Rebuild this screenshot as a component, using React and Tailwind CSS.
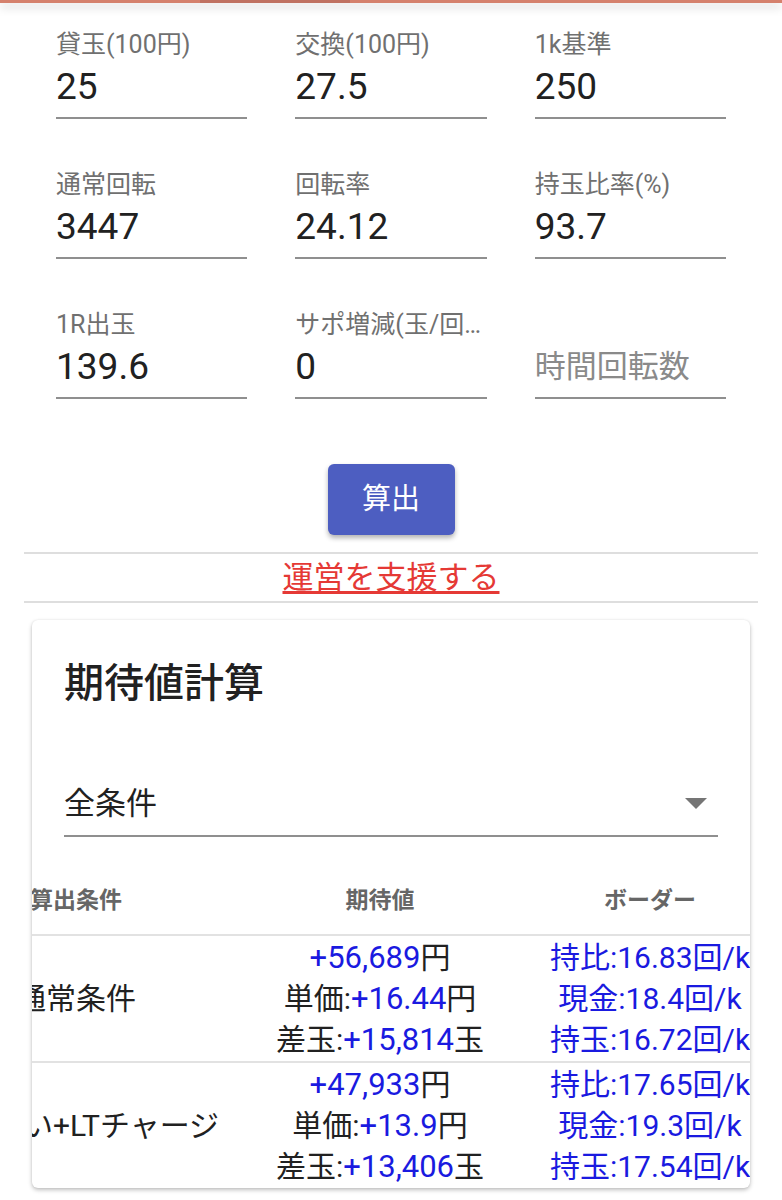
import React, { useLayoutEffect, useRef } from 'react';

const font = { fontFamily: 'Roboto, "Noto Sans CJK JP", sans-serif' };

const fields = [
  { label: '貸玉(100円)', value: '25' },
  { label: '交換(100円)', value: '27.5' },
  { label: '1k基準', value: '250' },
  { label: '通常回転', value: '3447' },
  { label: '回転率', value: '24.12' },
  { label: '持玉比率(%)', value: '93.7' },
  { label: '1R出玉', value: '139.6' },
  { label: 'サポ増減(玉/回転)', value: '0' },
  { label: '', value: '', placeholder: '時間回転数' },
];

const rows = [
  {
    name: '通常条件',
    ev: [['', '+56,689', '円'], ['単価:', '+16.44', '円'], ['差玉:', '+15,814', '玉']],
    border: ['持比:16.83回/k', '現金:18.4回/k', '持玉:16.72回/k'],
  },
  {
    name: '止めない+LTチャージ',
    ev: [['', '+47,933', '円'], ['単価:', '+13.9', '円'], ['差玉:', '+13,406', '玉']],
    border: ['持比:17.65回/k', '現金:19.3回/k', '持玉:17.54回/k'],
  },
];

const Field = ({ label, value, placeholder }) => (
  <div className="flex flex-col min-w-0">
    <div className="text-[25px] leading-[30px] text-[#707070] truncate h-[30px]">{label}</div>
    {placeholder ? (
      <div className="mt-[5px] text-[31px] leading-[44px] pb-[8px] border-b-2 border-[#8f8f8f] text-[#8a8a8a]">{placeholder}</div>
    ) : (
      <div className="mt-[5px] text-[37px] leading-[44px] pb-[8px] border-b-2 border-[#8f8f8f] text-[#212121]">{value}</div>
    )}
  </div>
);

const App = () => {
  const scrollRef = useRef(null);

  useLayoutEffect(() => {
    if (scrollRef.current) scrollRef.current.scrollLeft = 106;
  }, []);

  return (
    <div className="bg-white min-h-[1200px] w-[782px] overflow-hidden" style={font}>
      {/* app bar edge */}
      <div className="h-[3px] bg-[#d5816d] shadow-[0_4px_10px_rgba(0,0,0,0.22)] flex">
        <div className="ml-[200px] w-[150px] h-[3px] bg-[#c07262]" />
      </div>

      <div className="grid grid-cols-3 gap-x-[48px] gap-y-[51px] px-[56px] pt-[27px]">
        {fields.map((f, i) => <Field key={i} {...f} />)}
      </div>

      <div className="flex justify-center mt-[65px]">
        <button className="w-[127px] h-[71px] rounded-[6px] bg-[#4d5ec1] text-white text-[29px] shadow-[0_3px_5px_rgba(0,0,0,0.3)]">算出</button>
      </div>

      <div className="mx-[24px] mt-[17px] border-t-2 border-[#dedede]" />
      <div className="h-[47px] flex items-center justify-center">
        <a className="text-[31px] leading-[40px] text-[#e53935] underline underline-offset-[3px]">運営を支援する</a>
      </div>
      <div className="mx-[24px] border-t-2 border-[#dedede]" />

      <div className="mx-[32px] mt-[17px] rounded-[6px] bg-white shadow-[0_2px_4px_rgba(0,0,0,0.25),0_0_2px_rgba(0,0,0,0.08)] overflow-hidden">
        <div className="px-[32px] pt-[40px]">
          <h2 className="text-[40px] leading-[48px] font-medium text-[#212121]">期待値計算</h2>
          <div className="mt-[76px] flex items-center justify-between pb-[11px] border-b-2 border-[#8f8f8f]">
            <span className="text-[31px] leading-[40px] text-[#212121]">全条件</span>
            <svg width="24" height="12" viewBox="0 0 24 12" className="mr-[10px]">
              <path d="M1 0 L23 0 L12 11 Z" fill="#757575" />
            </svg>
          </div>
        </div>

        <div ref={scrollRef} className="mt-[26px] overflow-x-auto [scrollbar-width:none]">
          <table className="table-fixed w-[840px] border-collapse">
            <colgroup>
              <col className="w-[300px]" />
              <col className="w-[308px]" />
              <col className="w-[232px]" />
            </colgroup>
            <thead>
              <tr className="border-b-2 border-[#e2e2e2]">
                {['算出条件', '期待値', 'ボーダー'].map(h => (
                  <th key={h} className="h-[72px] text-center font-bold text-[23px] text-[#666666] pt-[6px]">{h}</th>
                ))}
              </tr>
            </thead>
            <tbody>
              {rows.map((r, i) => (
                <tr key={r.name} className={i === 0 ? 'border-b-2 border-[#e2e2e2]' : ''}>
                  <td className="text-center text-[30px] text-[#212121] whitespace-nowrap">{r.name}</td>
                  <td className="text-center text-[30px] leading-[41px] whitespace-nowrap py-[1px]">
                    {r.ev.map(([pre, num, unit], j) => (
                      <div key={j}>
                        <span className="text-[#212121]">{pre}</span>
                        <span className="text-[#1a1ae0] text-[31px]">{num}</span>
                        <span className="text-[#212121]">{unit}</span>
                      </div>
                    ))}
                  </td>
                  <td className="text-center text-[30px] leading-[41px] whitespace-nowrap text-[#1a1ae0] py-[1px]">
                    {r.border.map(b => <div key={b}>{b}</div>)}
                  </td>
                </tr>
              ))}
            </tbody>
          </table>
        </div>
      </div>
    </div>
  );
};

export default App;
